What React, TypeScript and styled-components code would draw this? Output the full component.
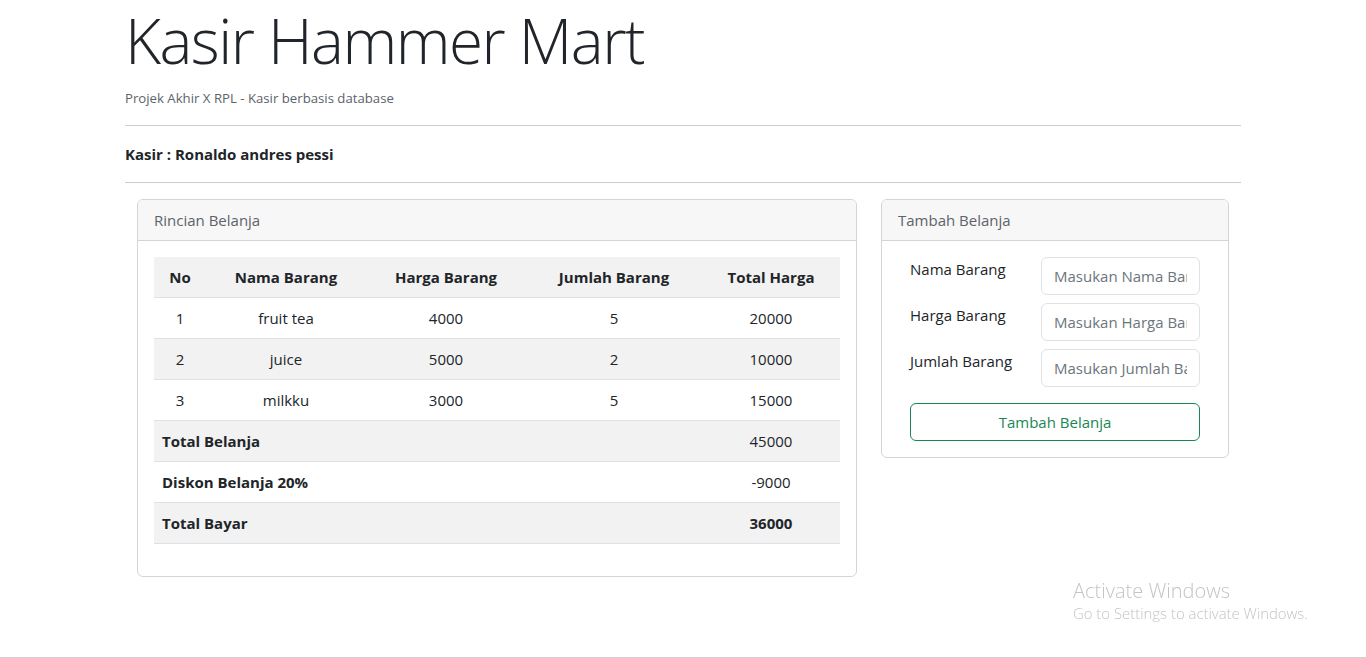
import React from "react";
import styled, { createGlobalStyle } from "styled-components";

const GlobalStyle = createGlobalStyle`
  html, body { margin: 0; padding: 0; background: #fff; }
  body {
    font-family: "Open Sans", "Noto Sans", "Liberation Sans", sans-serif;
    font-size: 15px;
    line-height: 24px;
    color: #212529;
  }
  * { box-sizing: border-box; }
`;

const Page = styled.div`
  width: 1116px;
  margin: 0 auto;
`;

const Title = styled.h1`
  margin: 0;
  padding-top: 1px;
  font-size: 62px;
  font-weight: 300;
  line-height: 78px;
  letter-spacing: -1.5px;
`;

const Subtitle = styled.p`
  margin: 9px 0 0;
  font-size: 13.2px;
  line-height: 21px;
  color: #5c636a;
`;

const Rule = styled.hr<{ $top: number }>`
  margin: ${(p) => p.$top}px 0 0;
  border: 0;
  border-top: 1px solid #cbcccd;
  height: 0;
`;

const Cashier = styled.h6`
  margin: 0;
  padding: 16px 0 16px;
  font-size: 15px;
  line-height: 24px;
  font-weight: 700;
`;

const Row = styled.div`
  display: flex;
  gap: 24px;
  padding: 16px 12px 0;
  align-items: flex-start;
`;

const Card = styled.section<{ $width: number }>`
  width: ${(p) => p.$width}px;
  border: 1px solid #d3d4d5;
  border-radius: 6px;
  overflow: hidden;
`;

const CardHeader = styled.header`
  padding: 8px 16px;
  height: 41px;
  line-height: 24px;
  background: #f7f7f7;
  border-bottom: 1px solid #d3d4d5;
  color: #5c636a;
  font-size: 15px;
`;

const CardBody = styled.div`
  padding: 16px;
`;

const Table = styled.table`
  width: 100%;
  border-collapse: collapse;
  margin-bottom: 16px;
  table-layout: fixed;
`;

const Tr = styled.tr<{ $shade?: boolean }>`
  background: ${(p) => (p.$shade ? "#f2f2f2" : "#fff")};
  border-bottom: 1px solid #dee2e6;
`;

const Th = styled.th`
  padding: 8px;
  height: 40px;
  font-weight: 700;
  text-align: center;
  line-height: 24px;
`;

const Td = styled.td<{ $align?: string; $bold?: boolean }>`
  padding: 8px;
  height: 40px;
  line-height: 24px;
  text-align: ${(p) => p.$align ?? "center"};
  font-weight: ${(p) => (p.$bold ? 700 : 400)};
`;

const FormWrap = styled.div`
  padding: 0 12px;
`;

const FormRow = styled.div`
  display: grid;
  grid-template-columns: 107px 1fr;
  column-gap: 24px;
  margin-bottom: 8px;
`;

const Label = styled.label`
  font-size: 15px;
  line-height: 24px;
  white-space: nowrap;
  color: #212529;
`;

const Input = styled.input`
  width: 100%;
  height: 38px;
  padding: 6px 12px;
  font-family: inherit;
  font-size: 15px;
  line-height: 24px;
  border: 1px solid #dee2e6;
  border-radius: 6px;
  color: #212529;
  &::placeholder { color: #6c757d; }
`;

const Button = styled.button`
  display: block;
  width: 100%;
  height: 38px;
  margin-top: 16px;
  border: 1px solid #198754;
  border-radius: 6px;
  background: transparent;
  color: #198754;
  font-family: inherit;
  font-size: 15px;
  line-height: 24px;
`;

const Watermark = styled.div`
  position: fixed;
  left: 1073px;
  top: 578px;
  color: #c4c4c4;
  pointer-events: none;
`;

const WmTitle = styled.div`
  font-size: 20px;
  line-height: 26px;
  font-weight: 300;
`;

const WmSub = styled.div`
  font-size: 14.9px;
  line-height: 19px;
  font-weight: 300;
`;

const BottomLine = styled.div`
  position: fixed;
  left: 0;
  right: 0;
  bottom: 0;
  height: 1px;
  background: #d0d0d0;
`;

const items = [
  { no: 1, nama: "fruit tea", harga: 4000, jumlah: 5 },
  { no: 2, nama: "juice", harga: 5000, jumlah: 2 },
  { no: 3, nama: "milkku", harga: 3000, jumlah: 5 },
];

export default function App() {
  const total = items.reduce((s, i) => s + i.harga * i.jumlah, 0);
  const diskon = total * 0.2;
  return (
    <>
      <GlobalStyle />
      <Page>
        <Title>Kasir Hammer Mart</Title>
        <Subtitle>Projek Akhir X RPL - Kasir berbasis database</Subtitle>
        <Rule $top={16} />
        <Cashier>Kasir : Ronaldo andres pessi</Cashier>
        <Rule $top={0} />
        <Row>
          <Card $width={720}>
            <CardHeader>Rincian Belanja</CardHeader>
            <CardBody>
              <Table>
                <colgroup>
                  <col style={{ width: 52 }} />
                  <col style={{ width: 160 }} />
                  <col style={{ width: 160 }} />
                  <col style={{ width: 176 }} />
                  <col style={{ width: 138 }} />
                </colgroup>
                <thead>
                  <Tr $shade>
                    <Th>No</Th>
                    <Th>Nama Barang</Th>
                    <Th>Harga Barang</Th>
                    <Th>Jumlah Barang</Th>
                    <Th>Total Harga</Th>
                  </Tr>
                </thead>
                <tbody>
                  {items.map((it, idx) => (
                    <Tr key={it.no} $shade={idx % 2 === 1}>
                      <Td>{it.no}</Td>
                      <Td>{it.nama}</Td>
                      <Td>{it.harga}</Td>
                      <Td>{it.jumlah}</Td>
                      <Td>{it.harga * it.jumlah}</Td>
                    </Tr>
                  ))}
                  <Tr $shade>
                    <Td colSpan={4} $align="left" $bold>Total Belanja</Td>
                    <Td>{total}</Td>
                  </Tr>
                  <Tr>
                    <Td colSpan={4} $align="left" $bold>Diskon Belanja 20%</Td>
                    <Td>-{diskon}</Td>
                  </Tr>
                  <Tr $shade>
                    <Td colSpan={4} $align="left" $bold>Total Bayar</Td>
                    <Td $bold>{total - diskon}</Td>
                  </Tr>
                </tbody>
              </Table>
            </CardBody>
          </Card>
          <Card $width={348}>
            <CardHeader>Tambah Belanja</CardHeader>
            <CardBody>
              <FormWrap>
                <FormRow>
                  <Label>Nama Barang</Label>
                  <Input placeholder="Masukan Nama Barang" />
                </FormRow>
                <FormRow>
                  <Label>Harga Barang</Label>
                  <Input placeholder="Masukan Harga Barang" />
                </FormRow>
                <FormRow>
                  <Label>Jumlah Barang</Label>
                  <Input placeholder="Masukan Jumlah Barang" />
                </FormRow>
                <Button type="button">Tambah Belanja</Button>
              </FormWrap>
            </CardBody>
          </Card>
        </Row>
      </Page>
      <Watermark>
        <WmTitle>Activate Windows</WmTitle>
        <WmSub>Go to Settings to activate Windows.</WmSub>
      </Watermark>
      <BottomLine />
    </>
  );
}
